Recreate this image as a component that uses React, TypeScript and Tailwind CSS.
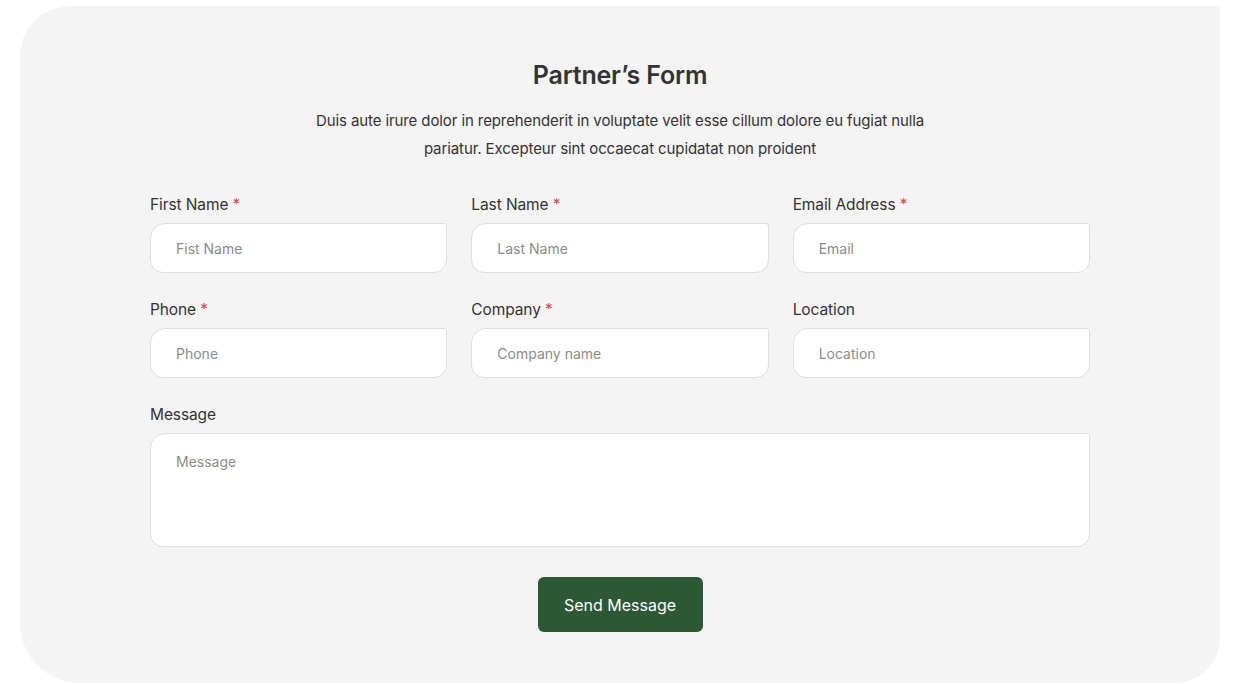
import React from "react";

interface FieldProps {
  label: string;
  placeholder: string;
  required?: boolean;
}

const Field: React.FC<FieldProps> = ({ label, placeholder, required }) => (
  <div className="flex flex-col">
    <label className="text-[15.5px] leading-[24px] text-[#333333] mb-[6px] tracking-[-0.1px]">
      {label}
      {required && <span className="text-[#e2434b]"> *</span>}
    </label>
    <input
      type="text"
      placeholder={placeholder}
      className="h-[50px] w-full bg-white border border-[#dedede] rounded-[15px_3px_13px_13px] px-[25px] text-[14px] text-[#333] placeholder:text-[#8c8c8c] outline-none"
    />
  </div>
);

export default function App() {
  return (
    <div className="min-h-screen bg-white pt-[6px] font-['Inter',sans-serif]">
      <div className="ml-[20px] w-[1200px] bg-[#f4f4f4] rounded-[50px_0_45px_60px] pt-[50px] pb-[51px] px-[130px]">
        <h2 className="text-center text-[25px] leading-[38px] font-semibold text-[#333333] tracking-[-0.2px]">
          Partner’s Form
        </h2>
        <p className="mt-[13px] mx-auto max-w-[640px] text-center text-[15px] leading-[28px] text-[#333333] tracking-[-0.1px]">
          Duis aute irure dolor in reprehenderit in voluptate velit esse cillum dolore eu fugiat nulla pariatur. Excepteur sint occaecat cupidatat non proident
        </p>

        <form className="mt-[30px]" onSubmit={(e) => e.preventDefault()}>
          <div className="grid grid-cols-3 gap-x-[24px] gap-y-[25px]">
            <Field label="First Name" placeholder="Fist Name" required />
            <Field label="Last Name" placeholder="Last Name" required />
            <Field label="Email Address" placeholder="Email" required />
            <Field label="Phone" placeholder="Phone" required />
            <Field label="Company" placeholder="Company name" required />
            <Field label="Location" placeholder="Location" />
          </div>

          <div className="mt-[25px] flex flex-col">
            <label className="text-[15.5px] leading-[24px] text-[#333333] mb-[6px] tracking-[-0.1px]">Message</label>
            <textarea
              placeholder="Message"
              className="h-[114px] w-full resize-none bg-white border border-[#dedede] rounded-[15px_3px_13px_13px] px-[25px] py-[17px] text-[14px] text-[#333] placeholder:text-[#8c8c8c] outline-none"
            />
          </div>

          <div className="mt-[30px] flex justify-center">
            <button
              type="submit"
              className="w-[165px] h-[55px] rounded-[6px] bg-[#2c5834] text-white text-[16px] font-normal"
            >
              Send Message
            </button>
          </div>
        </form>
      </div>
    </div>
  );
}
